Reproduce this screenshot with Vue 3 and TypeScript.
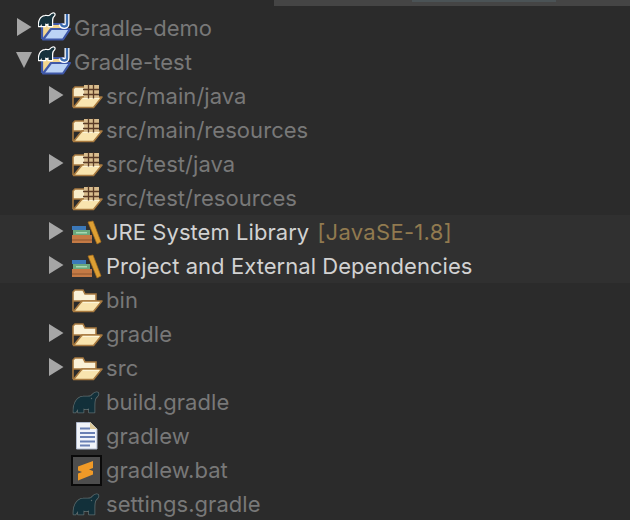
<template>
  <div class="tree">
    <div class="topbar">
      <span class="topbar__thumb"></span>
    </div>
    <div class="tree__rows">
      <div
        v-for="row in rows"
        :key="row.label"
        :class="['row', `row--level${row.level}`, { 'row--lib': row.icon === 'library' }]"
      >
        <span class="row__arrow">
          <svg v-if="row.arrow === 'right'" width="18" height="18" viewBox="0 0 18 18">
            <polygon points="2,0 16.500,9 2,18" fill="#a6a6a6" />
          </svg>
          <svg v-else-if="row.arrow === 'down'" width="18" height="18" viewBox="0 0 18 18">
            <polygon points="1,0 17,0 9,16" fill="#a6a6a6" />
          </svg>
        </span>

        <span class="row__icon">
          <svg v-if="row.icon === 'project'" width="34" height="34" viewBox="0 0 34 34">
            <path d="M4 28V13h25v6" fill="#f3d68f" stroke="#3f58a8" stroke-width="2.200" />
            <path d="M5 28.500h20l7-10.500H13z" fill="#bcd3f5" stroke="#3f58a8" stroke-width="2.200" stroke-linejoin="round" />
            <g transform="translate(-1.200 -2) scale(.62)">
              <path :d="elephant" fill="#16323c" stroke="#fff" stroke-width="4" paint-order="stroke" stroke-linejoin="round" />
            </g>
            <path d="M29 3v10c0 3-5 3.500-6 0" fill="none" stroke="#fff" stroke-width="5" />
            <path d="M29 3v10c0 3-5 3.500-6 0" fill="none" stroke="#3c6cb0" stroke-width="2.400" />
          </svg>
          <svg v-else-if="row.icon === 'package'" width="34" height="34" viewBox="0 0 34 34">
            <path d="M3 28V10l2-2h9l2 3h10v7H3z" fill="#f8ecc9" stroke="#a87a40" stroke-width="1.600" />
            <path d="M3.500 28.500h20L32 18H12z" fill="#f9e4ae" stroke="#a87a40" stroke-width="1.600" stroke-linejoin="round" />
            <path d="M13 19.500h16" stroke="#fdf5d8" stroke-width="1.200" />
            <rect x="14" y="6" width="15" height="13" fill="#d9bd8e" />
            <path d="M18.500 5.500v14M23.500 5.500v14M13 10.500h16M13 15.500h16" stroke="#5a3b26" stroke-width="1.300" />
          </svg>
          <svg v-else-if="row.icon === 'library'" width="34" height="34" viewBox="0 0 34 34">
            <rect x="2" y="20" width="20" height="8" fill="#c47a45" />
            <rect x="2" y="24.500" width="20" height="1" fill="#8e5730" />
            <rect x="3" y="15" width="17" height="5" fill="#6aa87d" />
            <rect x="6" y="17" width="11" height="1.500" fill="#a5d8b2" />
            <rect x="2" y="11" width="14" height="4" fill="#3b78b8" />
            <polygon points="18,7 23,6 31,27 27,29" fill="#dd9f33" stroke="#a86f1c" stroke-width="0.700" />
          </svg>
          <svg v-else-if="row.icon === 'folder'" width="34" height="34" viewBox="0 0 34 34">
            <path d="M3 28V9l2-2h8l2 4h11v7H3z" fill="#fbf2d8" stroke="#a87a40" stroke-width="1.600" />
            <path d="M3.500 28.500h20L32 18H12z" fill="#f9e4ae" stroke="#a87a40" stroke-width="1.600" stroke-linejoin="round" />
            <path d="M13 19.500h16" stroke="#fdf5d8" stroke-width="1.200" />
          </svg>
          <svg v-else-if="row.icon === 'gradle'" width="34" height="34" viewBox="0 0 34 34">
            <path :d="elephant" fill="#12303a" stroke="#5c6a6c" stroke-width="1.600" paint-order="stroke" stroke-linejoin="round" />
            <circle cx="21.500" cy="13.500" r=".7" fill="#5c6a6c" />
          </svg>
          <svg v-else-if="row.icon === 'file'" width="34" height="34" viewBox="0 0 34 34">
            <path d="M6.500 3.500h14l6.500 6.500v20H6.500z" fill="#f1f4fa" stroke="#aeb8cc" />
            <path d="M20 3l7 7h-7z" fill="#dcc99a" />
            <path d="M10 9.500h10M10 14h15M10 18h15M10 22.500h15M10 26.500h10" stroke="#6a80b4" stroke-width="1.800" />
          </svg>
          <svg v-else-if="row.icon === 'sublime'" width="34" height="34" viewBox="0 0 34 34">
            <rect x="2" y="3" width="29" height="29" fill="#4d4d4d" stroke="#0a0a0a" stroke-width="2" />
            <path d="M8 13.500L23 8v7l-4 1.500 4 1.500v3.500L8 27.500v-7l4-1.500-4-1.500z" fill="#f09a27" />
          </svg>
        </span>

        <span class="row__label">{{ row.label }}</span>
        <span v-if="row.suffix" class="row__suffix">{{ row.suffix }}</span>
      </div>
    </div>
  </div>
</template>

<script setup lang="ts">
interface Row {
  label: string
  level: 0 | 1
  icon: 'project' | 'package' | 'library' | 'folder' | 'gradle' | 'file' | 'sublime'
  arrow?: 'right' | 'down'
  suffix?: string
}

const elephant =
  'M3.500 27.500C3 20 6 12 13 11.500c3-.3 6 .5 8-.5 1.500-1.500 2.500-3 4.500-3.500 1.500-.5 3 0 3 1.500 0 2-2 2.500-3 4.500-1 2-1 4.500-1 7.500v6.500H19v-4c-2 1-4 1-5.500 0v4H8V24l-2.500 3.500z'

const rows: Row[] = [
  { label: 'Gradle-demo', level: 0, icon: 'project', arrow: 'right' },
  { label: 'Gradle-test', level: 0, icon: 'project', arrow: 'down' },
  { label: 'src/main/java', level: 1, icon: 'package', arrow: 'right' },
  { label: 'src/main/resources', level: 1, icon: 'package' },
  { label: 'src/test/java', level: 1, icon: 'package', arrow: 'right' },
  { label: 'src/test/resources', level: 1, icon: 'package' },
  { label: 'JRE System Library', level: 1, icon: 'library', arrow: 'right', suffix: '[JavaSE-1.8]' },
  { label: 'Project and External Dependencies', level: 1, icon: 'library', arrow: 'right' },
  { label: 'bin', level: 1, icon: 'folder' },
  { label: 'gradle', level: 1, icon: 'folder', arrow: 'right' },
  { label: 'src', level: 1, icon: 'folder', arrow: 'right' },
  { label: 'build.gradle', level: 1, icon: 'gradle' },
  { label: 'gradlew', level: 1, icon: 'file' },
  { label: 'gradlew.bat', level: 1, icon: 'sublime' },
  { label: 'settings.gradle', level: 1, icon: 'gradle' },
]
</script>

<style>
html,
body {
  margin: 0;
  background: #2b2b2b;
}
</style>

<style scoped>
.tree {
  position: relative;
  width: 630px;
  height: 520px;
  overflow: hidden;
  background: #2b2b2b;
  font-family: Inter, "Liberation Sans", sans-serif;
}

.topbar {
  position: absolute;
  top: 0;
  left: 274px;
  right: 0;
  height: 6px;
  background: #454545;
}

.topbar__thumb {
  position: absolute;
  top: 0;
  left: 138px;
  width: 144px;
  height: 2px;
  background: #4b5356;
}

.tree__rows {
  padding-top: 11px;
}

.row {
  display: flex;
  align-items: center;
  height: 34px;
  font-size: 22px;
  letter-spacing: 0.05px;
  color: #787878;
  white-space: nowrap;
}

.row--level0 {
  padding-left: 15px;
}

.row--level1 {
  padding-left: 47px;
}

.row--lib {
  background: #303030;
  color: #d2d2d2;
}

.row__arrow {
  display: flex;
  width: 23px;
  height: 18px;
  margin-top: -2px;
  flex-shrink: 0;
}

.row__icon {
  display: flex;
  width: 34px;
  height: 34px;
  flex-shrink: 0;
}

.row__label {
  margin-left: 2px;
}

.row__suffix {
  margin-left: 8px;
  letter-spacing: 0.3px;
  color: #917a4f;
}
</style>
